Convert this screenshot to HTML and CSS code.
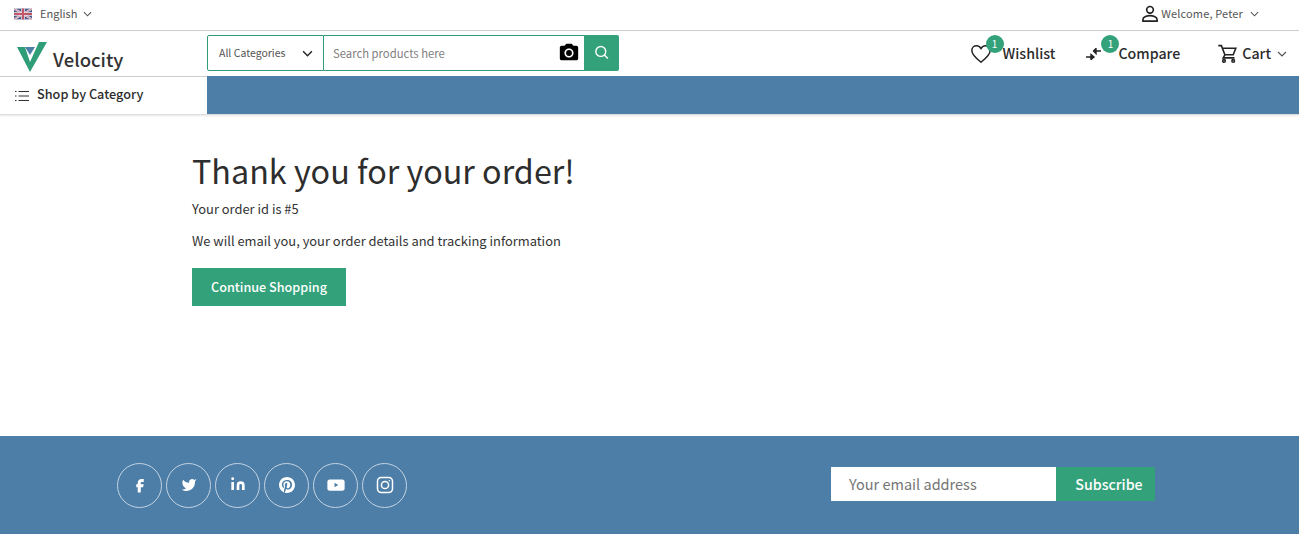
FILE: index.html
```html
<!DOCTYPE html>
<html lang="en">
<head>
    <meta charset="UTF-8">
    <meta name="viewport" content="width=device-width, initial-scale=1.0">
    <title>Velocity</title>
    <link rel="stylesheet" href="styles.css">
</head>
<body>
    <div class="top-bar">
        <div class="locale">
            <svg class="flag" viewBox="0 0 60 36">
                <rect width="60" height="36" fill="#4a5a8c"/>
                <path d="M0 0L60 36M60 0L0 36" stroke="#e8e4e8" stroke-width="7"/>
                <path d="M0 0L60 36M60 0L0 36" stroke="#c4707e" stroke-width="2.5"/>
                <path d="M30 0V36M0 18H60" stroke="#e8e4e8" stroke-width="12"/>
                <path d="M30 0V36M0 18H60" stroke="#c4566a" stroke-width="7"/>
            </svg>
            <span>English</span>
            <svg class="chevron" viewBox="0 0 10 6"><path d="M1 1l4 4 4-4"/></svg>
        </div>
        <div class="account">
            <svg class="user-icon" viewBox="0 0 24 24"><circle cx="12" cy="7" r="4"/><path d="M3.500 20.500v-2c0-3 5.500-4.500 8.500-4.500s8.500 1.500 8.500 4.500v2z"/></svg>
            <span>Welcome, Peter</span>
            <svg class="chevron" viewBox="0 0 10 6"><path d="M1 1l4 4 4-4"/></svg>
        </div>
    </div>

    <div class="header">
        <div class="logo">
            <svg class="logo-mark" viewBox="0 0 30 30">
                <path d="M8 5h10l-5 8z" fill="#4d7ea8"/>
                <path d="M0 5h8l5 15L22 0h8L13 30z" fill="#2f9e78"/>
            </svg>
            <span>Velocity</span>
        </div>
        <div class="search">
            <div class="search-category">
                <span>All Categories</span>
                <svg class="chevron dark" viewBox="0 0 10 6"><path d="M1 1l4 4 4-4"/></svg>
            </div>
            <div class="search-input">
                <span>Search products here</span>
                <svg class="camera" viewBox="0 0 24 24">
                    <path d="M9 2L7.170 4H4c-1.100 0-2 .9-2 2v12c0 1.100.9 2 2 2h16c1.100 0 2-.9 2-2V6c0-1.100-.9-2-2-2h-3.170L15 2H9zm3 15c-2.760 0-5-2.240-5-5s2.240-5 5-5 5 2.240 5 5-2.240 5-5 5z"/>
                    <circle cx="12" cy="12" r="3.200"/>
                </svg>
            </div>
            <div class="search-button">
                <svg viewBox="0 0 24 24"><circle cx="11" cy="10.500" r="7"/><path d="M16 15.500l5 5"/></svg>
            </div>
        </div>
        <div class="header-links">
            <div class="header-link wishlist">
                <svg class="link-icon" viewBox="0 0 24 24"><path d="M12 21C5 15.500 2 12 2 8.200 2 5 4.400 3 7 3c2 0 3.800 1 5 3 1.200-2 3-3 5-3 2.600 0 5 2 5 5.200C22 12 19 15.500 12 21z"/></svg>
                <span class="badge">1</span>
                <span>Wishlist</span>
            </div>
            <div class="header-link compare">
                <svg class="compare-icon" viewBox="0 0 16 12"><path d="M0 9h7M5 6.500L8 9l-3 2.500zM15 3H10M10 .5L7.500 3 10 5.500z"/></svg>
                <span class="badge">1</span>
                <span>Compare</span>
            </div>
            <div class="header-link cart">
                <svg class="cart-icon" viewBox="0 0 24 24">
                    <path d="M1.500 3h3.500l4 10.500h9.500l3-7.500H6"/>
                    <path d="M9 13.500l-2 3.500h13"/>
                    <circle cx="8" cy="20.500" r="1.500"/>
                    <circle cx="18.500" cy="20.500" r="1.500"/>
                </svg>
                <span>Cart</span>
                <svg class="chevron" viewBox="0 0 10 6"><path d="M1 1l4 4 4-4"/></svg>
            </div>
        </div>
    </div>

    <div class="nav">
        <div class="nav-category">
            <svg class="list-icon" viewBox="0 0 14 12"><path d="M3.500 1.500H14M3.500 6H14M3.500 10.500H14M0 1.500h1.500M0 6h1.500M0 10.500h1.500"/></svg>
            <span>Shop by Category</span>
        </div>
    </div>

    <div class="main">
        <h1>Thank you for your order!</h1>
        <p class="order-id">Your order id is #5</p>
        <p class="order-note">We will email you, your order details and tracking information</p>
        <button class="continue">Continue Shopping</button>
    </div>

    <div class="footer">
        <div class="social">
            <span class="social-item">
                <svg class="icon-large" viewBox="0 0 24 24"><path d="M14 8h3V4h-3c-2.800 0-5 2.200-5 5v2H7v4h2v7h4v-7h3l1-4h-4V9c0-.6.4-1 1-1z"/></svg>
            </span>
            <span class="social-item">
                <svg viewBox="0 0 24 24"><path d="M23 3a10.900 10.900 0 0 1-3 1.500 4.480 4.480 0 0 0-7.860 3v1A10.660 10.660 0 0 1 3 4s-4 9 5 13a11.640 11.640 0 0 1-7 2c9 5 20 0 20-11.500a4.500 4.500 0 0 0-.08-.83A7.720 7.720 0 0 0 23 3z"/></svg>
            </span>
            <span class="social-item">
                <svg class="icon-raised" viewBox="0 0 24 24"><path d="M16 8a6 6 0 0 1 6 6v7h-4v-7a2 2 0 0 0-4 0v7h-4v-7a6 6 0 0 1 6-6z"/><rect x="2" y="9" width="4" height="12"/><circle cx="4" cy="4" r="2.200"/></svg>
            </span>
            <span class="social-item">
                <svg viewBox="0 0 24 24"><path d="M12 0C5.373 0 0 5.372 0 12c0 5.084 3.163 9.426 7.627 11.174-.105-.949-.2-2.405.042-3.441.218-.937 1.407-5.965 1.407-5.965s-.359-.719-.359-1.782c0-1.668.967-2.914 2.171-2.914 1.023 0 1.518.769 1.518 1.690 0 1.029-.655 2.568-.994 3.995-.283 1.194.599 2.169 1.777 2.169 2.133 0 3.772-2.249 3.772-5.495 0-2.873-2.064-4.882-5.012-4.882-3.414 0-5.418 2.561-5.418 5.207 0 1.031.397 2.138.893 2.738.098.119.112.224.083.345l-.333 1.360c-.053.220-.174.267-.402.161-1.499-.698-2.436-2.889-2.436-4.649 0-3.785 2.750-7.262 7.929-7.262 4.163 0 7.398 2.967 7.398 6.931 0 4.136-2.607 7.464-6.227 7.464-1.216 0-2.359-.631-2.750-1.378l-.748 2.853c-.271 1.043-1.002 2.350-1.492 3.146C9.570 23.812 10.763 24 12 24c6.627 0 12-5.373 12-12 0-6.628-5.373-12-12-12z"/></svg>
            </span>
            <span class="social-item">
                <svg class="icon-large" viewBox="0 0 24 24"><path fill-rule="evenodd" d="M3.500 4.500h17c1.700 0 3 1.300 3 3v9c0 1.700-1.300 3-3 3h-17c-1.700 0-3-1.300-3-3v-9c0-1.700 1.300-3 3-3zM10 9v6l5-3z"/></svg>
            </span>
            <span class="social-item">
                <svg class="icon-large outline" viewBox="0 0 24 24"><rect x="2" y="2" width="20" height="20" rx="5"/><circle cx="12" cy="12" r="4.800"/><circle class="dot" cx="17.800" cy="6.200" r="1"/></svg>
            </span>
        </div>
        <div class="subscribe">
            <div class="subscribe-input">Your email address</div>
            <button class="subscribe-button">Subscribe</button>
        </div>
    </div>
</body>
</html>
```

FILE: styles.css
```css
* {
    box-sizing: border-box;
    font-family: "Noto Sans CJK SC", "Noto Sans", sans-serif;
}

body {
    margin: 0;
    background: white;
    color: #333;
}

svg {
    display: block;
    flex-shrink: 0;
}

.chevron {
    width: 9px;
    height: 6px;
    fill: none;
    stroke: #555;
    stroke-width: 1.2;
}

.chevron.dark {
    width: 11px;
    height: 7px;
    stroke: #222;
    stroke-width: 1.3;
}

/* top bar */
.top-bar {
    display: flex;
    justify-content: space-between;
    align-items: center;
    height: 31px;
    padding: 0 40px 2px 14px;
    border-bottom: 1px solid #ccc;
    font-size: 11px;
    line-height: 16px;
    color: #555;
}

.top-bar span {
    padding-bottom: 2px;
}

.locale,
.account {
    display: flex;
    align-items: center;
}

.flag {
    width: 18px;
    height: 12px;
    margin-right: 8px;
}

.locale .chevron {
    margin-left: 6px;
}

.user-icon {
    width: 20px;
    height: 20px;
    margin-right: 1px;
    fill: none;
    stroke: #222;
    stroke-width: 2;
}

.account span {
    letter-spacing: 0.15px;
}

.account .chevron {
    margin-left: 7px;
}

/* header */
.header {
    display: flex;
    align-items: center;
    height: 45px;
    padding-left: 16px;
}

.logo {
    display: flex;
    align-items: center;
    width: 191px;
    padding-top: 3px;
    font-size: 18.500px;
    font-weight: 500;
    line-height: 26px;
    color: #333;
}

.logo-mark {
    width: 30px;
    height: 30px;
    margin: 4px 6px 0 1px;
}

.logo span {
    padding-top: 8px;
}

.search {
    display: flex;
    width: 412px;
    height: 36px;
    margin-top: -1px;
    line-height: 16px;
}

.search-category {
    display: flex;
    justify-content: space-between;
    align-items: center;
    width: 117px;
    padding: 0 10px 0 11px;
    border: 1px solid #2f9a78;
    border-radius: 2px 0 0 2px;
    color: #555;
    font-size: 10.500px;
}

.search-input {
    display: flex;
    justify-content: space-between;
    align-items: center;
    flex: 1;
    padding: 0 4px 0 9px;
    border-top: 1px solid #2f9a78;
    border-bottom: 1px solid #2f9a78;
    color: #808080;
    font-size: 11.300px;
}

.camera {
    width: 22px;
    height: 22px;
    fill: black;
}

.search-button {
    display: flex;
    justify-content: center;
    align-items: center;
    width: 35px;
    padding-bottom: 2px;
    background: #33a27a;
    border-radius: 0 2px 2px 0;
}

.search-button svg {
    width: 17px;
    height: 17px;
    fill: none;
    stroke: white;
    stroke-width: 2;
}

.header-links {
    display: flex;
    align-items: center;
    margin-left: auto;
    padding-right: 12px;
    font-size: 14.200px;
    font-weight: 500;
    line-height: 20px;
    color: #2b2b2b;
}

.header-link {
    position: relative;
    display: flex;
    align-items: center;
}

.header-link span {
    padding-bottom: 1px;
}

.wishlist {
    margin-right: 31px;
}

.compare {
    margin-right: 37px;
}

.link-icon {
    width: 22px;
    height: 22px;
    margin-right: 11px;
    fill: none;
    stroke: #222;
    stroke-width: 1.600;
}

.compare-icon {
    width: 16px;
    height: 12px;
    margin-right: 16px;
    stroke: #222;
    stroke-width: 1.400;
    fill: #222;
}

.cart-icon {
    width: 21px;
    height: 21px;
    margin-right: 4px;
    fill: none;
    stroke: #222;
    stroke-width: 1.800;
}

.cart .chevron {
    width: 10px;
    margin-left: 6px;
}

.badge {
    position: absolute;
    top: -8px;
    width: 18px;
    height: 18px;
    border-radius: 50%;
    background: #33a27a;
    color: white;
    font-size: 10px;
    font-weight: 400;
    line-height: 18px;
    text-align: center;
}

.wishlist .badge {
    left: 16px;
}

.compare .badge {
    left: 15px;
}

/* category nav */
.nav {
    height: 39px;
    background: #4d7ea8;
    border-bottom: 1px solid #ddd;
    box-shadow: 0 1px 2px rgba(0, 0, 0, 0.1);
}

.nav-category {
    display: flex;
    align-items: center;
    width: 207px;
    height: 38px;
    padding: 0 0 3px 15px;
    background: white;
    border-top: 1px solid #ccc;
    font-size: 12.700px;
    font-weight: 500;
    line-height: 18px;
    color: #2b2b2b;
}

.list-icon {
    width: 14px;
    height: 12px;
    margin-right: 8px;
    margin-top: 3px;
    stroke: #333;
    stroke-width: 1.100;
    fill: none;
}

/* order message */
.main {
    height: 321px;
    padding: 33px 0 0 192px;
}

h1 {
    margin: 0 0 7px;
    font-size: 32.300px;
    font-weight: 400;
    line-height: 44px;
    color: #2d2d2d;
}

.order-id,
.order-note {
    margin: 0;
    font-size: 12.900px;
    line-height: 20px;
    color: #333;
}

.order-id {
    margin-bottom: 12px;
}

.order-note {
    margin-bottom: 17px;
}

.continue {
    width: 154px;
    height: 38px;
    padding: 0 0 2px;
    background: #33a27a;
    border: none;
    color: white;
    font-size: 12.600px;
    font-weight: 500;
}

/* footer */
.footer {
    display: flex;
    justify-content: space-between;
    align-items: center;
    height: 98px;
    padding: 0 144px 0 117px;
    background: #4d7ea8;
}

.social {
    display: flex;
    gap: 4px;
}

.social-item {
    display: flex;
    justify-content: center;
    align-items: center;
    width: 45px;
    height: 45px;
    border: 1px solid #c3d3e1;
    border-radius: 50%;
}

.social-item svg {
    width: 16px;
    height: 16px;
    fill: white;
}

.social-item svg.icon-large {
    width: 18px;
    height: 18px;
}

.social-item svg.icon-raised {
    margin-bottom: 2px;
}

.social-item svg.outline {
    fill: none;
    stroke: white;
    stroke-width: 2;
}

.outline .dot {
    fill: white;
    stroke: none;
}

.subscribe {
    display: flex;
    height: 34px;
    margin-bottom: 2px;
}

.subscribe-input {
    width: 225px;
    padding: 0 18px;
    background: white;
    color: #757575;
    font-size: 14.500px;
    line-height: 34px;
}

.subscribe-button {
    width: 99px;
    padding: 0 0 0 7px;
    background: #33a27a;
    border: none;
    color: white;
    font-size: 14.200px;
    font-weight: 500;
}
```
